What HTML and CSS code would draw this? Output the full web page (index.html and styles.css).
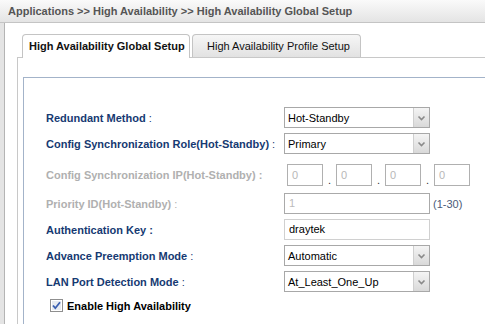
FILE: index.html
```html
<!DOCTYPE html>
<html>
<head>
<meta charset="utf-8">
<link rel="stylesheet" href="styles.css">
</head>
<body>
<div class="crumb">Applications &gt;&gt; High Availability &gt;&gt; High Availability Global Setup</div>
<div class="frame">
  <div class="tabs">
    <div class="tab active">High Availability Global Setup</div>
    <div class="tab">High Availability Profile Setup</div>
  </div>
  <div class="panel">
    <div class="box">
      <div class="row">
        <div class="label">Redundant Method <span class="colon">:</span></div>
        <div class="select"><span>Hot-Standby</span><i class="btn"><svg width="9" height="6" viewBox="0 0 9 6"><path d="M1.5 1.5 L4.5 4.5 L7.5 1.5" fill="none" stroke="#8a8a8a" stroke-width="1.6"/></svg></i></div>
      </div>
      <div class="row">
        <div class="label">Config Synchronization Role(Hot-Standby) <span class="colon">:</span></div>
        <div class="select"><span>Primary</span><i class="btn"><svg width="9" height="6" viewBox="0 0 9 6"><path d="M1.5 1.5 L4.5 4.5 L7.5 1.5" fill="none" stroke="#8a8a8a" stroke-width="1.6"/></svg></i></div>
      </div>
      <div class="row iprow">
        <div class="label dis">Config Synchronization IP(Hot-Standby) :</div>
        <div class="ip">
          <div class="ipbox">0</div><span class="dot">.</span>
          <div class="ipbox">0</div><span class="dot">.</span>
          <div class="ipbox">0</div><span class="dot">.</span>
          <div class="ipbox">0</div>
        </div>
      </div>
      <div class="row">
        <div class="label dis">Priority ID(Hot-Standby) <span class="colon">:</span></div>
        <div class="input disabled">1</div>
        <span class="hint">(1-30)</span>
      </div>
      <div class="row">
        <div class="label">Authentication Key :</div>
        <div class="input key">draytek</div>
      </div>
      <div class="row">
        <div class="label">Advance Preemption Mode <span class="colon">:</span></div>
        <div class="select"><span>Automatic</span><i class="btn"><svg width="9" height="6" viewBox="0 0 9 6"><path d="M1.5 1.5 L4.5 4.5 L7.5 1.5" fill="none" stroke="#8a8a8a" stroke-width="1.6"/></svg></i></div>
      </div>
      <div class="row">
        <div class="label">LAN Port Detection Mode <span class="colon">:</span></div>
        <div class="select"><span>At_Least_One_Up</span><i class="btn"><svg width="9" height="6" viewBox="0 0 9 6"><path d="M1.5 1.5 L4.5 4.5 L7.5 1.5" fill="none" stroke="#8a8a8a" stroke-width="1.6"/></svg></i></div>
      </div>
      <div class="check">
        <svg class="cb" width="13" height="13" viewBox="0 0 13 13"><rect x="0.5" y="0.5" width="12" height="12" fill="#f2f2f2" stroke="#8f8f8f"/><rect x="1.5" y="1.5" width="10" height="10" fill="#e6eaf0" stroke="#ffffff" stroke-width="1"/><path d="M3 6.5 L5.3 9.2 L10 3.2" fill="none" stroke="#3a5fb0" stroke-width="1.8"/></svg>
        <span>Enable High Availability</span>
      </div>
    </div>
  </div>
</div>
</body>
</html>
```
FILE: styles.css
```css
html, body {
  margin: 0;
  padding: 0;
}
body {
  width: 485px;
  height: 324px;
  overflow: hidden;
  background: #e4e4e4;
  font-family: "Liberation Sans", Arial, sans-serif;
  font-size: 11px;
}
.crumb {
  height: 22px;
  line-height: 22px;
  padding-left: 8px;
  font-size: 11px;
  font-weight: bold;
  color: #555;
  background: linear-gradient(#fafafa, #e4e4e4);
  border-bottom: 1px solid #c4c4c4;
  white-space: nowrap;
}
.frame {
  margin-left: 4px;
  border-left: 1px solid #b4b4b4;
  background: #fff;
  height: 301px;
  overflow: hidden;
  display: flex;
  flex-direction: column;
}
.tabs {
  display: flex;
  padding-top: 11px;
  gap: 2px;
  border-bottom: 1px solid #c8c8c8;
  margin-left: 12px;
  padding-left: 5px;
}
.tab {
  height: 22px;
  line-height: 23px;
  padding: 0 14px;
  border: 1px solid #c4c4c4;
  border-bottom: none;
  border-radius: 4px 4px 0 0;
  background: linear-gradient(#f6f6f6, #e2e2e2);
  color: #111;
  white-space: nowrap;
  width: 139px;
  text-align: center;
}
.tab.active {
  background: #fff;
  font-weight: bold;
  width: 154px;
  padding: 0 6px;
  margin-bottom: -1px;
  height: 23px;
}
.panel {
  flex: 1;
  display: flex;
  flex-direction: column;
  margin-left: 12px;
  border-left: 1px solid #c8c8c8;
  padding-top: 19px;
  padding-left: 5px;
}
.box {
  flex: 1;
  border-top: 1px solid #a3b3c9;
  border-left: 1px solid #a3b3c9;
  padding-top: 29px;
  padding-left: 22px;
}
.row {
  display: flex;
  align-items: center;
  height: 21px;
  margin-bottom: 5px;
}
.iprow {
  height: 22px;
  margin-top: 10px;
  margin-bottom: 7px;
}
.label {
  width: 238px;
  font-weight: bold;
  color: #163a72;
  white-space: nowrap;
}
.label.dis {
  color: #b0b0b0;
}
.colon {
  font-weight: normal;
}
.select {
  width: 144px;
  height: 19px;
  border: 1px solid #a8a8a8;
  display: flex;
  align-items: center;
  background: #fff;
  color: #000;
}
.select span {
  flex: 1;
  padding-left: 3px;
}
.btn {
  width: 15px;
  height: 19px;
  border-left: 1px solid #cfcfcf;
  background: linear-gradient(#f4f4f4, #d9d9d9);
  display: flex;
  align-items: center;
  justify-content: center;
}
.ip {
  display: flex;
  align-items: flex-end;
  margin-left: 3px;
}
.ipbox {
  width: 30px;
  height: 20px;
  line-height: 20px;
  padding-left: 4px;
  border: 1px solid #b0b0b0;
  color: #b8b8b8;
}
.dot {
  width: 13px;
  text-align: center;
  line-height: 11px;
  color: #333;
}
.input {
  width: 140px;
  height: 19px;
  line-height: 19px;
  padding-left: 4px;
  border: 1px solid #aaa;
}
.input.disabled {
  color: #bbb;
}
.input.key {
  border-color: #d0d0d0;
  color: #000;
}
.hint {
  margin-left: 3px;
  color: #4a5a78;
}
.check {
  display: flex;
  align-items: center;
  gap: 4px;
  margin-top: 7px;
  margin-left: 4px;
  font-weight: bold;
  color: #000;
}
.cb {
  display: block;
}
```
